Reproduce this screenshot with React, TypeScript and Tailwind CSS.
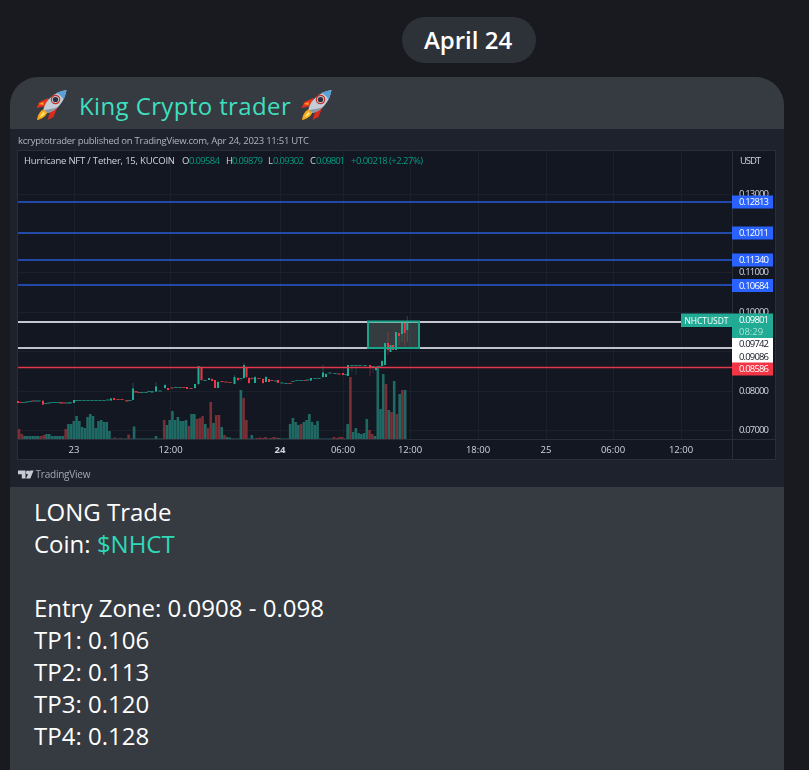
const volumes = [
  -10, -5, 3, 3, 3, 3, 3, 3, -3, -4, 5, 5, 3, 3, 3, 3, 3, -10,
  15, 15, 18, 23, 18, 12, 11, 22, 25, 23, 11, 18, 19, 17, 17, 8,
  0.5, -1.5, 0.5, -1, 0.5, 0.5, -4.5, 0.5, 12.5, 0.5, 0.5, 0.5, 0.5, 0.5, 0.5, 0.5, 3, 0.5, 0.5,
  -19, 14, 19, 28, 19, 22, 18, 18, 19, -13, 25, 25, -20, -21, -23, 15, -11, -37, 16, -24, -24, 12, -4, 2, 1.5,
  0.5, 0.5, 0.5, 49, -41, -19, 0.5, 4, 0.5, -1, -1.5, -1, -2, 0.5, -1, -2, -1.5, 1, 0.5, 0.5, 0.5,
  15, 21, 17, 14, -15, 17, 19, 25, 17, 14, 18,
  0.5, 0.5, 0.5, 0.5, 0.5, -2, -1, -2, -2, 0.5,
  15, -62, 7, 11, 6, 5, 6, 20, -9, -5, 3, 73, 30, 65, -55, 29, -27, 58, -25, 45, -49, 49,
];

// x, body top, body bottom, wick top, wick bottom, up?
const candles: [number, number, number, number, number, boolean][] = [
  [18, 401, 403, 401, 403, false], [21, 402, 403, 402, 403, false], [24, 402, 403, 402, 403, true], [27, 401.5, 402.5, 401, 403, true],
  [30, 401, 402, 401, 402, true], [33, 400.5, 401.5, 400, 402, false], [36, 400.5, 401.5, 400, 402, true], [39, 400.5, 401.5, 400, 402, true],
  [43, 400.7, 404.7, 400.7, 404.7, false], [46, 403, 404, 403, 404, true], [49, 402.5, 403.5, 402, 404, true], [52, 402, 403, 402, 403, true],
  [55, 402, 403, 402, 403, true], [58, 402, 403, 402, 403, true], [61, 402, 403.5, 402, 404, false], [64, 402.5, 403.5, 402, 404, false],
  [67, 402.5, 403.5, 402, 404, true], [70, 402, 403.5, 402, 404, true], [74, 400, 403, 400, 403, true], [77, 400, 401, 400, 401, true],
  [80, 400, 401, 400, 401, true], [84, 400, 401, 400, 401, true], [88, 400, 401, 400, 401, true], [92, 400, 401, 400, 401, true],
  [96, 400, 401, 400, 401, true], [100, 400, 401, 400, 401, true], [104, 400, 401, 400, 401, true], [108, 399.5, 400.5, 399, 401, true],
  [111, 398.5, 400.5, 398, 401, true], [114, 398, 400, 398, 400, false], [118, 399, 400, 399, 400, false], [122, 399, 400, 399, 400, false],
  [127, 400, 401.5, 400, 401.5, false], [130, 400, 401, 400, 401, true],
  [133, 388.5, 400, 383, 400, true], [136, 391, 392.5, 391, 393, false], [139, 392, 393, 392, 393, false], [142, 392, 393, 392, 393, true],
  [146, 392, 393, 392, 393, true], [149, 391, 392, 391, 392, true], [152, 391, 392.5, 391, 393, true],
  [156, 386.5, 391.5, 382, 392, true], [160, 390.5, 391.5, 390, 392, true], [165, 385, 388, 384, 389, true], [168, 388, 390, 388, 390, false],
  [172, 387.5, 388.5, 387, 389, false], [176, 387, 388, 386, 388, true], [180, 387, 388, 387, 388, true], [184, 387, 388, 387, 388, false],
  [187, 387, 389, 387, 389, false], [191, 388, 389, 388, 389, false], [195, 384, 388, 384, 389, true],
  [198.5, 366, 384, 366, 385, true], [201.5, 367, 380, 366, 381, false], [205, 380, 381, 379, 381, true], [209, 378, 380, 378, 380, true],
  [212, 379, 381, 378, 381, false], [215, 380, 388, 380, 388, false], [218, 382, 388, 381, 388, true], [222, 381, 382, 381, 383, false],
  [226, 381.5, 382.5, 381, 383, false], [230, 382, 383, 382, 383, false], [234.5, 377, 384, 375, 384, true], [238, 378, 380, 377, 381, false],
  [241, 378, 379, 378, 381, true], [244, 365, 378, 363, 379, true], [246.5, 367, 377, 366, 378, false], [249, 378, 383, 377, 384, false],
  [252, 378, 379, 377, 380, false], [255, 377, 383, 376, 383, true], [259, 378, 379, 378, 379, false], [263, 379, 383, 378, 384, false],
  [266, 377, 382, 376, 382, true], [269, 379, 382, 379, 382, false], [272, 380, 381, 380, 381, false], [276, 380.5, 381.5, 380, 382, true],
  [278, 380, 383, 380, 383, false], [282, 382.5, 383.5, 382, 384, true], [286, 383, 384, 383, 384, true], [290, 383, 384, 383, 384, false],
  [293, 381, 382, 381, 382, true], [297, 380, 381, 380, 381, true], [301, 380, 381, 380, 381, true], [305, 380, 381, 380, 381, false],
  [308, 379.5, 380.5, 379, 381, true], [311, 378, 380.5, 378, 381, true], [315, 378, 379, 378, 379, true], [319, 378, 379, 378, 379, true],
  [323, 372.5, 377, 365, 378, true], [326, 374, 377, 373, 377, true], [330, 372.5, 373.5, 372, 374, true], [335, 373, 374, 373, 374, true],
  [339, 373.5, 374.5, 373, 375, false], [343, 373, 375, 373, 375, false], [346, 374, 375, 374, 376, true], [348, 365, 376, 365, 376, true],
  [352, 365, 366, 365, 372, true], [356, 365, 366, 365, 375, true], [360, 365, 366, 365, 366, true], [365, 365, 366, 365, 368, true],
  [370, 365, 368, 365, 376, false], [373, 366, 367, 366, 373, true], [376, 367, 370, 366, 371, true], [379, 366, 367, 365, 367, true],
  [382, 361, 366, 360, 367, true], [385, 343, 365, 343, 365, true], [388, 343, 350, 332, 355, false], [390.5, 345, 352, 345, 352, true],
  [393, 345, 350, 345, 350, false], [396, 332, 350, 332, 350, true], [399, 333, 336, 333, 345, false], [402, 323, 334, 323, 342, true],
  [404.7, 323, 333, 323, 346, false], [407.3, 323, 330, 316, 342, true],
];

const timeLabels: [string, number, boolean][] = [
  ["23", 74, false], ["12:00", 170.5, false], ["24", 280, true], ["06:00", 343, false], ["12:00", 410, false],
  ["18:00", 478, false], ["25", 546, false], ["06:00", 613, false], ["12:00", 681, false],
];

const priceLabels: [string, number, string, string][] = [
  ["0.12813", 202, "#2962ff", "#ffffff"],
  ["0.12011", 233, "#2962ff", "#ffffff"],
  ["0.11340", 260, "#2962ff", "#ffffff"],
  ["0.10684", 285.5, "#2962ff", "#ffffff"],
  ["0.09742", 344, "#ffffff", "#131722"],
  ["0.09086", 356.5, "#ffffff", "#131722"],
  ["0.08586", 369, "#f23645", "#ffffff"],
];

const axisLabels: [string, number][] = [
  ["0.13000", 197], ["0.11000", 275], ["0.10000", 315], ["0.08000", 394], ["0.07000", 433],
];

function Rocket() {
  return (
    <svg width="33" height="32" viewBox="0 0 32 32" className="shrink-0">
      <path d="M10 17 L1 19 L4 13 L13 9 Z" fill="#e8321e" />
      <path d="M3 15 L8 13 L8 16 Z" fill="#f9a11b" />
      <path d="M15 22 L12 31 L18 28 L22 18 Z" fill="#d92c1c" />
      <path d="M9 20 C5 21 2 26 1.500 31 C6 30.500 11 27 12 23 Z" fill="#f7a81b" />
      <path d="M8 23 C6 24.500 5 26.500 4.500 28 C6.500 27.500 8.500 26 9.500 24.500 Z" fill="#fde77a" />
      <path d="M8 20 C10 11 19 3 31 1 C29 13 21 22 12 24 Z" fill="#c4ccd6" />
      <path d="M21 4 C24 2.500 28 1.500 31 1 C30.500 4 29.500 7 28 11 C27 8 25 6 21 4 Z" fill="#5b9fd8" />
      <path d="M9 21 L12 24 C16 23 19 21 22 18 C17 20 13 20 9 21 Z" fill="#8a95a5" />
      <circle cx="20" cy="10.500" r="4.200" fill="#b9c1cc" stroke="#c9302a" strokeWidth="1.200" />
      <circle cx="20" cy="10.500" r="2.600" fill="#2b2f38" />
    </svg>
  );
}

function Chart() {
  return (
    <svg width="774" height="358" viewBox="10 129 774 358" className="block font-['Open_Sans',sans-serif] [filter:blur(0.3px)]">
      <rect x="10" y="129" width="774" height="358" fill="#1e222d" />
      <text x="18" y="144" textLength="291" fontSize="9.500" fill="#b2b5be">
        kcryptotrader published on TradingView.com, Apr 24, 2023 11:51 UTC
      </text>

      <rect x="17.500" y="150.500" width="758" height="309" fill="#131722" stroke="#2a2e39" />
      {[74, 170, 280, 343, 410, 478, 546, 613, 681].map((x) => (
        <line key={x} x1={x + 0.5} x2={x + 0.5} y1="151" y2="439" stroke="#1c202b" />
      ))}
      {[194, 233, 272, 312, 351, 391, 430].map((y) => (
        <line key={y} x1="18" x2="732" y1={y + 0.5} y2={y + 0.5} stroke="#1c202b" />
      ))}
      <line x1="732.500" x2="732.500" y1="151" y2="459" stroke="#2a2e39" />
      <line x1="18" x2="775" y1="439.500" y2="439.500" stroke="#2a2e39" />

      <text x="24" y="164" textLength="151" fontSize="9.500" fill="#d1d4dc">Hurricane NFT / Tether, 15, KUCOIN</text>
      <text x="182" y="164" fontSize="9.500" fill="#d1d4dc">O</text>
      <text x="189" y="164" textLength="31" fontSize="9.500" fill="#089981">0.09584</text>
      <text x="226" y="164" fontSize="9.500" fill="#d1d4dc">H</text>
      <text x="232" y="164" textLength="31" fontSize="9.500" fill="#089981">0.09879</text>
      <text x="268" y="164" fontSize="9.500" fill="#d1d4dc">L</text>
      <text x="273" y="164" textLength="31" fontSize="9.500" fill="#089981">0.09302</text>
      <text x="310" y="164" fontSize="9.500" fill="#d1d4dc">C</text>
      <text x="316" y="164" textLength="29" fontSize="9.500" fill="#089981">0.09801</text>
      <text x="351" y="164" textLength="72" fontSize="9.500" fill="#089981">+0.00218 (+2.27%)</text>
      <text x="740" y="164" textLength="21" fontSize="9.500" fill="#d1d4dc">USDT</text>

      {volumes.map((v, i) => (
        <rect
          key={i}
          x={18 + i * 2.738 - 0.2}
          y={439 - Math.abs(v)}
          width="2.600"
          height={Math.abs(v)}
          fill={v < 0 ? "#7a2f35" : "#1f6a64"}
        />
      ))}

      {[202, 233, 260, 285].map((y) => (
        <line key={y} x1="18" x2="732" y1={y} y2={y} stroke="#2a5bd6" strokeWidth="1.500" />
      ))}
      <rect x="368" y="322" width="51" height="26" fill="#6f7f78" fillOpacity="0.36" />
      <line x1="18" x2="681" y1="322" y2="322" stroke="#c4c7cd" strokeWidth="2" />
      <line x1="18" x2="732" y1="348" y2="348" stroke="#bfc2c8" strokeWidth="2" />

      {candles.map(([x, top, bottom, wickTop, wickBottom, up], i) => {
        const flat = bottom - top <= 1.5;
        const color = up ? (flat ? "#1b7f72" : "#22ab94") : flat ? "#b03a42" : "#f23645";
        return (
          <g key={i}>
            <line x1={x} x2={x} y1={wickTop} y2={wickBottom} stroke={color} strokeOpacity="0.55" strokeWidth="0.700" />
            <rect x={x - (flat ? 1.7 : 1)} y={top} width={flat ? 3.400 : 2} height={bottom - top} fill={color} />
          </g>
        );
      })}

      <line x1="18" x2="732" y1="367.500" y2="367.500" stroke="#e0374a" strokeWidth="1.500" />
      <rect x="368" y="321.500" width="51" height="26.500" fill="none" stroke="#1ba38a" strokeWidth="2" />

      {axisLabels.map(([value, y]) => (
        <text key={value} x="739" y={y} textLength="30" fontSize="9.500" fill="#d1d4dc">{value}</text>
      ))}

      {priceLabels.map(([value, y, bg, fg]) => (
        <g key={value}>
          <rect x="732" y={y - 6.500} width="41" height="13" fill={bg} />
          <text x="739" y={y + 3.300} textLength="30" fontSize="9.500" fill={fg}>{value}</text>
        </g>
      ))}
      <rect x="681" y="313.500" width="51" height="13.500" fill="#22ab94" />
      <text x="684.500" y="323.500" textLength="44" fontSize="8.500" fill="#ffffff">NHCTUSDT</text>
      <rect x="732" y="313.500" width="41" height="24.500" fill="#22ab94" />
      <text x="739" y="323" textLength="30" fontSize="9.500" fill="#ffffff">0.09801</text>
      <text x="739" y="335" fontSize="9.500" fill="#a9e3d8">08:29</text>

      {timeLabels.map(([label, x, bold]) => (
        <text
          key={label + x}
          x={x}
          y="453"
          fontSize="9.500"
          textAnchor="middle"
          fontWeight={bold ? 700 : 400}
          fill="#d1d4dc"
        >
          {label}
        </text>
      ))}

      <path d="M18 470.500h7.500v8h-3.700v-4.300h-3.800z" fill="#c8cbd2" />
      <circle cx="27.800" cy="472.400" r="1.900" fill="#c8cbd2" />
      <path d="M29.800 470.500h3.800l-3.300 8h-4.300z" fill="#c8cbd2" />
      <text x="35.500" y="478" textLength="55" fontSize="10" fill="#a3a6af">TradingView</text>
    </svg>
  );
}

export default function App() {
  return (
    <div className="h-[770px] w-[809px] overflow-hidden bg-[#181a1f] pt-[17px] font-['Open_Sans',sans-serif] text-white">
      <div className="ml-[402px] flex h-[46px] w-[134px] items-center justify-center rounded-[23px] bg-[#2d3239] pr-[2px] text-[24px] font-semibold">
        April 24
      </div>

      <div className="mt-[14px] ml-[10px] w-[774px] overflow-hidden rounded-t-[28px] bg-[#363a41]">
        <div className="flex h-[52px] items-center pt-[4px] pl-[25px] text-[24px] leading-[32px] font-medium tracking-[0.38px] text-[#3fdfbf]">
          <Rocket />
          <span className="ml-[11px] pt-[2px]">King Crypto trader</span>
          <span className="ml-[9px]">
            <Rocket />
          </span>
        </div>

        <Chart />

        <div className="px-[24px] pt-[9px] text-[24px] leading-[32px]">
          <p>LONG Trade</p>
          <p>
            Coin: <span className="text-[#2ed9b8]">$NHCT</span>
          </p>
          <p className="mt-[32px]">Entry Zone: 0.0908 - 0.098</p>
          <p>TP1: 0.106</p>
          <p>TP2: 0.113</p>
          <p>TP3: 0.120</p>
          <p>TP4: 0.128</p>
          <div className="h-[40px]" />
        </div>
      </div>
    </div>
  );
}
